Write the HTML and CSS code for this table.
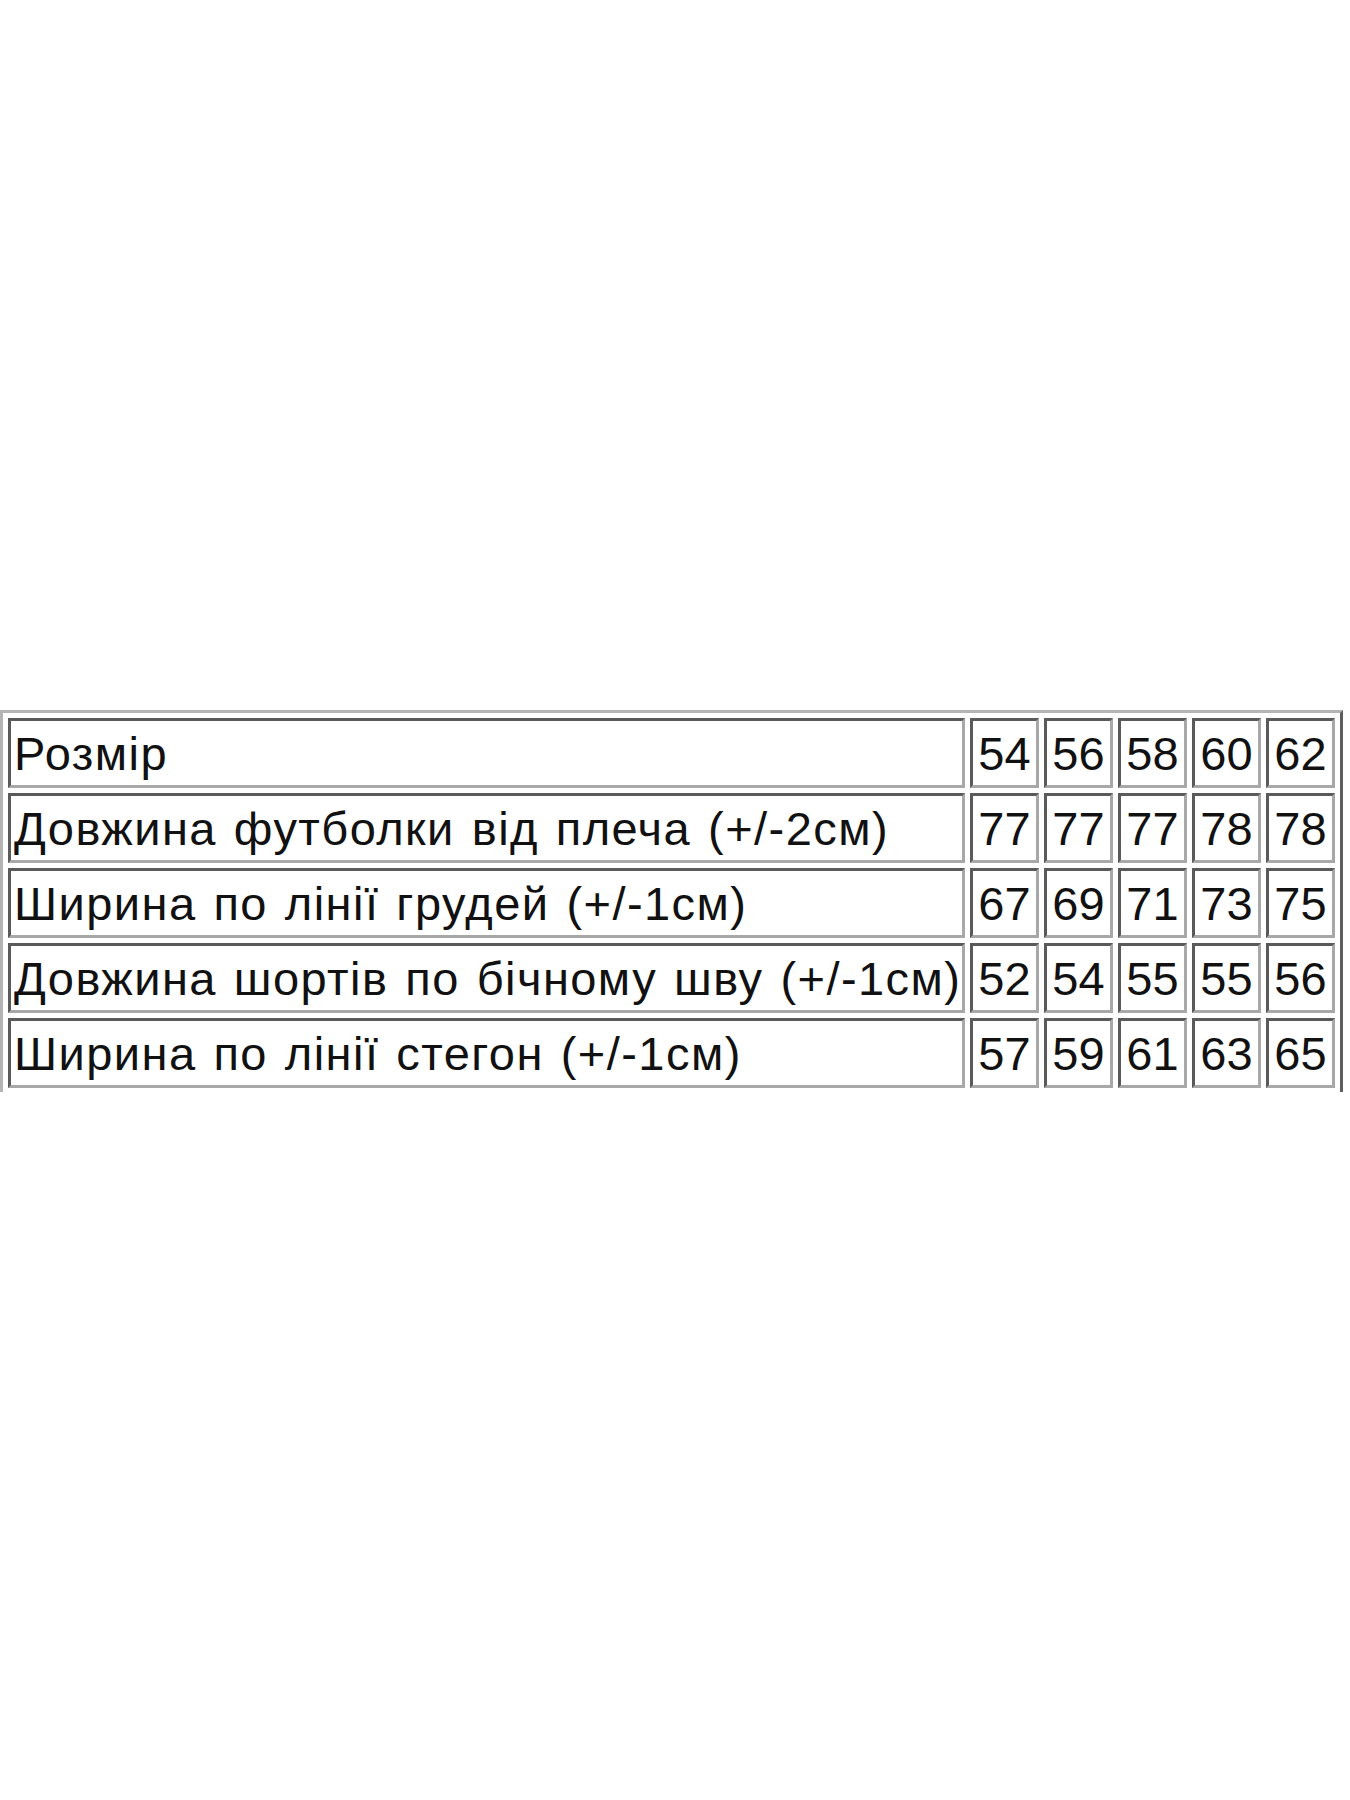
FILE: index.html
```html
<!DOCTYPE html>
<html lang="uk">
<head>
<meta charset="utf-8">
<title>Розмір</title>
<link rel="stylesheet" href="styles.css">
</head>
<body>
<div class="frame">
  <table class="sizes">
    <tr><td class="label">Розмір</td><td class="num">54</td><td class="num">56</td><td class="num">58</td><td class="num">60</td><td class="num">62</td></tr>
    <tr><td class="label">Довжина футболки від плеча (+/-2см)</td><td class="num">77</td><td class="num">77</td><td class="num">77</td><td class="num">78</td><td class="num">78</td></tr>
    <tr><td class="label">Ширина по лінії грудей (+/-1см)</td><td class="num">67</td><td class="num">69</td><td class="num">71</td><td class="num">73</td><td class="num">75</td></tr>
    <tr><td class="label">Довжина шортів по бічному шву (+/-1см)</td><td class="num">52</td><td class="num">54</td><td class="num">55</td><td class="num">55</td><td class="num">56</td></tr>
    <tr><td class="label">Ширина по лінії стегон (+/-1см)</td><td class="num">57</td><td class="num">59</td><td class="num">61</td><td class="num">63</td><td class="num">65</td></tr>
  </table>
</div>
</body>
</html>
```

FILE: styles.css
```css
html, body {
  margin: 0;
  padding: 0;
  background: #ffffff;
}

.frame {
  margin-top: 710px;
  width: 1345px;
  height: 382px;
  overflow: hidden;
}

.sizes {
  width: 1343px;
  border-collapse: separate;
  border-spacing: 5px;
  border-style: solid;
  border-width: 3px;
  border-color: #b4b4b4 #5e5e5e #5e5e5e #b4b4b4;
  font-family: "Liberation Sans", Arial, sans-serif;
  font-size: 47px;
  color: #111111;
  table-layout: fixed;
}

.sizes td {
  box-sizing: border-box;
  height: 70px;
  border-style: solid;
  border-width: 3px;
  border-color: #5a5a5a #a8a8a8 #a8a8a8 #5a5a5a;
  padding: 0 3px;
  white-space: nowrap;
  overflow: hidden;
  vertical-align: middle;
  line-height: 1;
}

.sizes .label {
  width: 957px;
  text-align: left;
  letter-spacing: 1.45px;
  word-spacing: 2.4px;
  padding-left: 3px;
  padding-right: 0;
}

.sizes .num {
  width: 69px;
  text-align: center;
  padding: 0;
}
```
